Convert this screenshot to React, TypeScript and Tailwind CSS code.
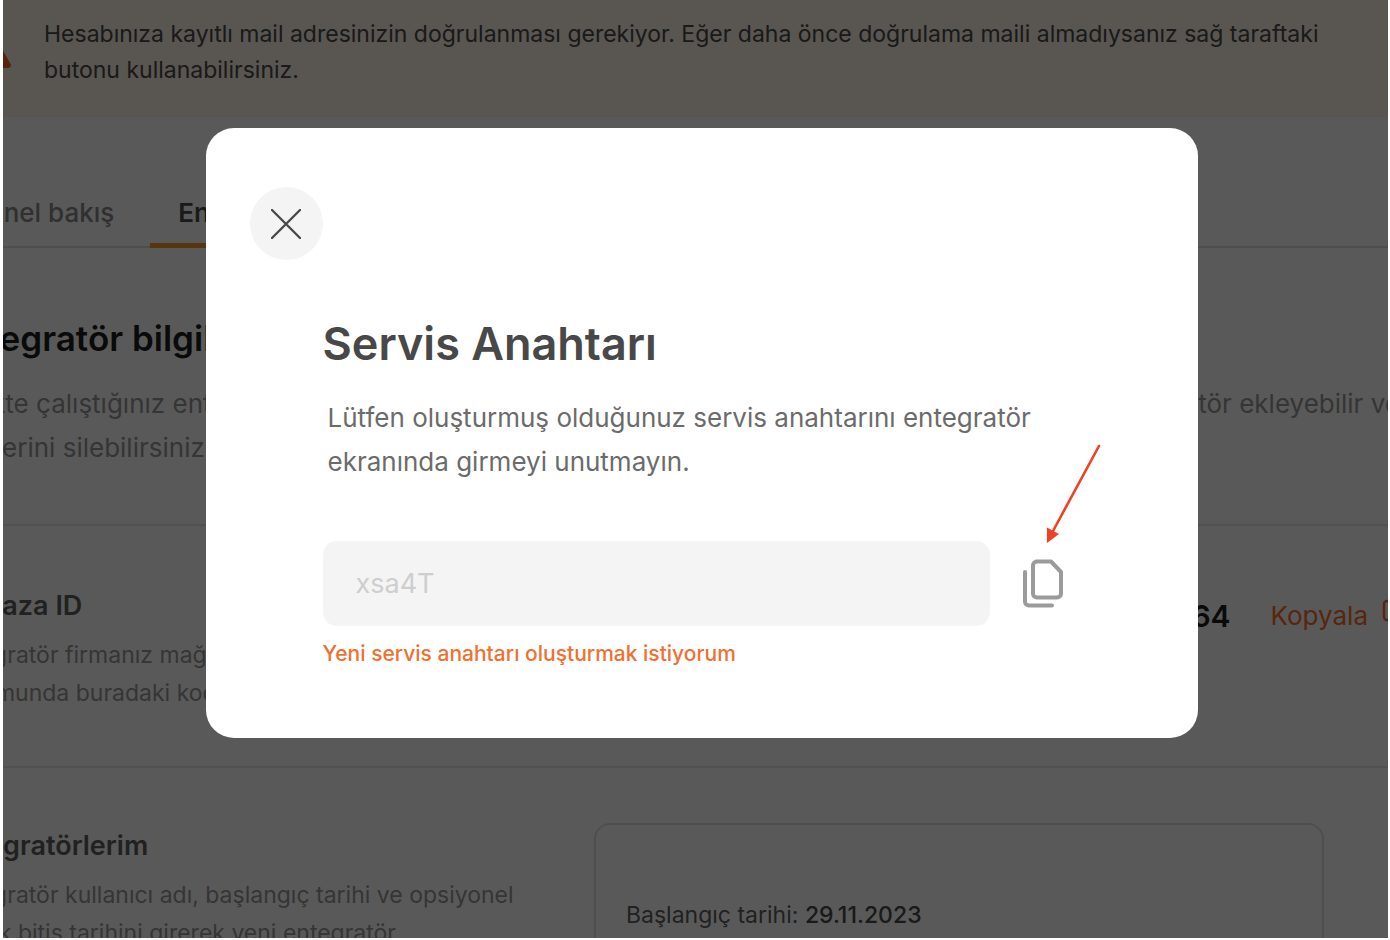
import { useState } from "react";

interface CopyIconProps {
  className?: string;
}

const CopyIcon: React.FC<CopyIconProps> = ({ className }: CopyIconProps) => (
  <svg
    viewBox="0 0 40 49"
    fill="none"
    stroke="currentColor"
    strokeWidth="4"
    strokeLinecap="round"
    strokeLinejoin="round"
    className={className}
    aria-hidden="true"
  >
    <path d="M13 2.5h15l10 10.500v21.500a4 4 0 0 1-4 4H14a4 4 0 0 1-4-4V6.500a4 4 0 0 1 4-4Z" />
    <path d="M2 13v29.500a4 4 0 0 0 4 4h23" />
  </svg>
);

const DuplicateIcon: React.FC = () => (
  <svg
    viewBox="0 0 30 30"
    fill="none"
    stroke="currentColor"
    strokeWidth="2.4"
    strokeLinecap="round"
    strokeLinejoin="round"
    className="size-[30px] shrink-0"
    aria-hidden="true"
  >
    <rect x="2" y="3" width="19" height="19" rx="3" />
    <path d="M27 10v14a4 4 0 0 1-4 4H9" />
  </svg>
);

const WarningIcon: React.FC = () => (
  <svg viewBox="0 0 48 42" className="h-[42px] w-12 shrink-0" aria-hidden="true">
    <path
      d="M20 3a5 5 0 0 1 8 0l19 34a3 3 0 0 1-3 5H4a3 3 0 0 1-3-5Z"
      fill="#f5602a"
    />
    <path d="M24 14v13M24 33v1" stroke="#fff" strokeWidth="4" strokeLinecap="round" />
  </svg>
);

const Banner: React.FC = () => (
  <div className="-ml-10 flex h-[117px] gap-[33px] overflow-hidden bg-[#fff3e6] pt-4">
    <div className="pt-[10px]">
      <WarningIcon />
    </div>
    <p className="max-w-[1320px] text-[23px] leading-9 text-[#4a4a4a]">
      Hesabınıza kayıtlı mail adresinizin doğrulanması gerekiyor. Eğer daha önce
      doğrulama maili almadıysanız sağ taraftaki butonu kullanabilirsiniz.
    </p>
  </div>
);

const Tabs: React.FC = () => (
  <nav className="flex h-[131px] items-end gap-9 border-b-2 border-[#e0e0e0] pl-6 font-medium">
    <button type="button" className="pb-[17px] text-[26px] leading-8 text-[#8a8a8a]">
      Genel bakış
    </button>
    <button
      type="button"
      className="-mb-[2px] rounded-t border-b-[5px] border-[#f59a2c] px-7 pb-[14px] text-[26px] leading-8 font-semibold text-[#4a4a4a]"
    >
      Entegratör
    </button>
  </nav>
);

const Overview: React.FC = () => (
  <main className="-ml-[58px]">
    <Tabs />

    <section className="h-[278px] border-b-2 border-[#e8e8e8] pt-[70px]">
      <h1 className="text-[35px] leading-10 font-semibold text-[#1f1f1f]">
        Entegratör bilgileri
      </h1>
      <div className="mt-6 -mr-3 flex justify-between text-[26px] leading-[44px] whitespace-nowrap text-[#999]">
        <p>
          Birlikte çalıştığınız entegratör
          <br />
          bilgilerini silebilirsiniz.
        </p>
        <p>entegratör ekleyebilir ve</p>
      </div>
    </section>

    <section className="flex h-[242px] justify-between border-b-2 border-[#e8e8e8] pt-[62px]">
      <div>
        <h2 className="text-[27px] leading-9 font-semibold text-[#5f5f5f]">
          Mağaza ID
        </h2>
        <p className="mt-3 text-[23px] leading-[38px] text-[#999]">
          Entegratör firmanız mağaza
          <br />
          durumunda buradaki kodu
        </p>
      </div>
      <div className="-mr-6 flex items-center gap-10 self-start pt-[10px]">
        <span className="text-3xl font-semibold text-[#1f1f1f]">64</span>
        <button
          type="button"
          className="flex items-start gap-[14px] text-[26px] leading-9 text-[#f5702a]"
        >
          Kopyala
          <DuplicateIcon />
        </button>
      </div>
    </section>

    <section className="flex justify-between pt-[55px] pr-16">
      <div className="pt-[5px]">
        <h2 className="text-[27px] leading-9 font-semibold text-[#5f5f5f]">
          Entegratörlerim
        </h2>
        <p className="mt-3 text-[23px] leading-[38px] text-[#999]">
          Entegratör kullanıcı adı, başlangıç tarihi ve opsiyonel
          <br />
          olarak bitiş tarihini girerek yeni entegratör
        </p>
      </div>
      <div className="h-60 w-[730px] rounded-2xl border-2 border-[#e0e0e0] px-[30px] pt-[72px] text-[23px] leading-9 text-[#5f5f5f]">
        Başlangıç tarihi: <span className="font-medium text-[#4a4a4a]">29.11.2023</span>
      </div>
    </section>
  </main>
);

const ServiceKeyModal: React.FC = () => {
  const [serviceKey, setServiceKey] = useState("xsa4T");

  return (
    <div
      role="dialog"
      aria-labelledby="service-key-title"
      className="h-[610px] w-[992px] rounded-[28px] bg-white pt-[59px] pl-11"
    >
      <button
        type="button"
        aria-label="Kapat"
        className="flex size-[73px] items-center justify-center rounded-full bg-[#f4f4f4] text-[#4a4a4a]"
      >
        <svg viewBox="0 0 30 30" className="size-[30px]" aria-hidden="true">
          <path
            d="M1 1l28 28M29 1L1 29"
            stroke="currentColor"
            strokeWidth="2.4"
            strokeLinecap="round"
          />
        </svg>
      </button>

      <div className="mt-[52px] ml-[73px]">
        <h2
          id="service-key-title"
          className="text-[45px] leading-[64px] font-semibold text-[#484848]"
        >
          Servis Anahtarı
        </h2>
        <p className="mt-5 ml-[5px] text-[26px] leading-[44px] text-[#6b6b6b]">
          Lütfen oluşturmuş olduğunuz servis anahtarını entegratör
          <br />
          ekranında girmeyi unutmayın.
        </p>

        <div className="mt-[57px] flex items-center gap-[33px]">
          <input
            type="text"
            aria-label="Servis Anahtarı"
            value={serviceKey}
            onChange={(e) => setServiceKey(e.target.value)}
            className="h-[85px] w-[667px] rounded-[14px] bg-[#f4f4f4] px-[33px] text-[27px] text-[#cecece] outline-none"
          />
          <div className="relative">
            <button type="button" aria-label="Kopyala" className="block text-[#9b9b9b]">
              <CopyIcon className="h-[49px] w-10" />
            </button>
            <svg
              viewBox="0 0 56 100"
              className="absolute bottom-full left-6 mb-4 h-[100px] w-14"
              aria-hidden="true"
            >
              <path
                d="M52 3L6 88"
                stroke="#f04124"
                strokeWidth="2.6"
                strokeLinecap="round"
              />
              <path d="M0 84.500l12 6.500L0 100Z" fill="#f04124" />
            </svg>
          </div>
        </div>

        <a href="#" className="mt-3 inline-block text-[21px] leading-8 font-medium text-[#f07030]">
          Yeni servis anahtarı oluşturmak istiyorum
        </a>
      </div>
    </div>
  );
};

export default function App() {
  return (
    <div className="h-screen bg-white pr-[2px] pb-[2px] pl-[3px] font-['Inter',sans-serif]">
      <div className="relative h-full overflow-hidden">
        <Banner />
        <Overview />
        <div className="absolute inset-0 flex justify-center bg-black/65 pt-32 pl-3">
          <ServiceKeyModal />
        </div>
      </div>
    </div>
  );
}
